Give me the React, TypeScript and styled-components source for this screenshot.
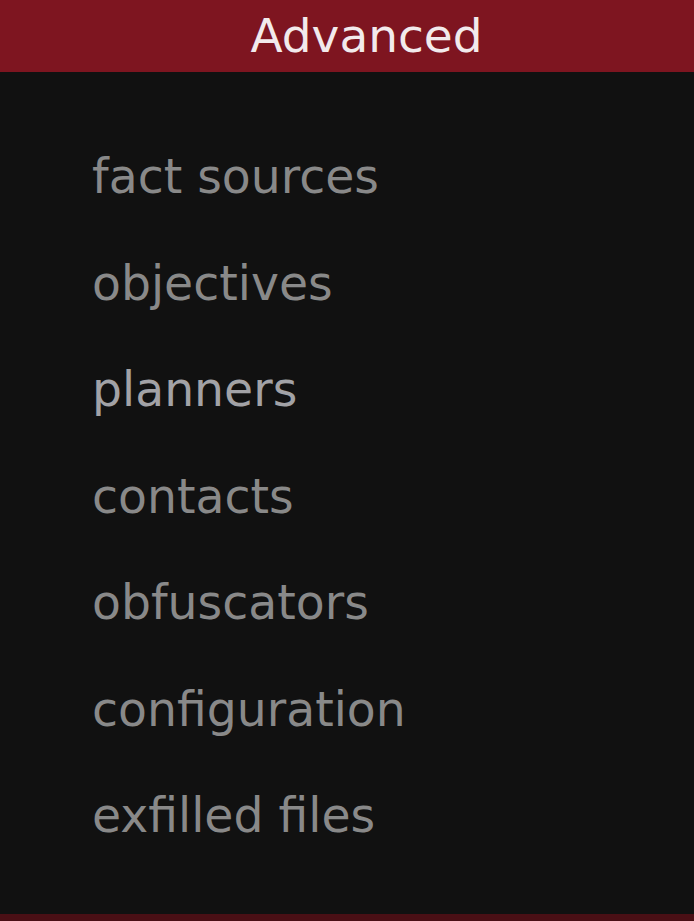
import React from 'react';
import styled, { createGlobalStyle } from 'styled-components';

const items = [
	{ label: 'fact sources' },
	{ label: 'objectives' },
	{ label: 'planners', active: true },
	{ label: 'contacts' },
	{ label: 'obfuscators' },
	{ label: 'configuration' },
	{ label: 'exfilled files' },
];

const App = () => {
	return (
		<>
			<GlobalStyle />
			<Panel>
				<Header>Advanced</Header>
				<Menu>
					{items.map((item) => (
						<MenuItem key={item.label} $active={item.active}>
							{item.label}
						</MenuItem>
					))}
				</Menu>
				<NextHeader />
			</Panel>
		</>
	);
};
export default App;

const GlobalStyle = createGlobalStyle`
	html, body {
		margin: 0;
		padding: 0;
		background: #111111;
	}
	* {
		box-sizing: border-box;
	}
`;

const Panel = styled.div`
	width: 694px;
	height: 921px;
	display: flex;
	flex-direction: column;
	background: #111111;
	font-family: 'DejaVu Sans', 'Liberation Sans', sans-serif;
	overflow: hidden;
`;

const Header = styled.div`
	height: 72px;
	line-height: 72px;
	padding-left: 39px;
	text-align: center;
	font-size: 47px;
	color: #f2eaec;
	background: #7e1520;
	flex-shrink: 0;
`;

const Menu = styled.ul`
	list-style: none;
	margin: 0;
	padding: 52px 0 0 92px;
	flex: 1;
`;

const MenuItem = styled.li<{ $active?: boolean }>`
	font-size: 47.3px;
	line-height: 106.5px;
	color: ${({ $active }) => ($active ? '#a2a2a6' : '#898989')};
	white-space: nowrap;
`;

const NextHeader = styled.div`
	height: 7px;
	background: #4a0f15;
	flex-shrink: 0;
`;
